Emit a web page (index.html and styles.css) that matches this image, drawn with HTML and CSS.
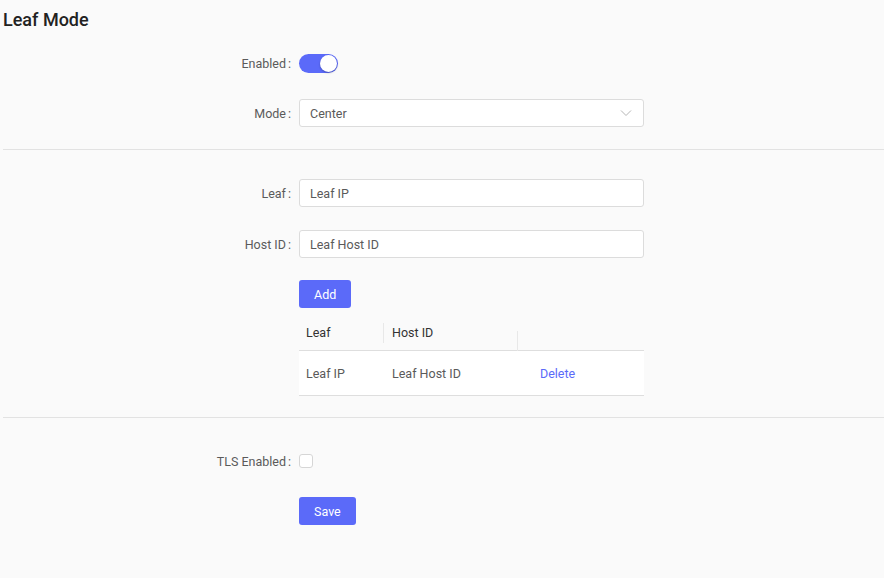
FILE: index.html
```html
<!DOCTYPE html>
<html>
<head lang="en">
    <meta charset="UTF-8">
    <title>Leaf Mode</title>
    <link rel="stylesheet" href="styles.css">
</head>
<body>
<div class="page">
    <h1 class="title">Leaf Mode</h1>

    <div class="section first">
        <div class="row">
            <label class="label">Enabled</label>
            <div class="control">
                <span class="switch"><span class="knob"></span></span>
            </div>
        </div>
        <div class="row">
            <label class="label">Mode</label>
            <div class="control">
                <div class="select">
                    <span>Center</span>
                    <svg width="12" height="8" viewBox="0 0 12 8">
                        <path d="M1 1.5 L6 6.5 L11 1.5" fill="none" stroke="#b5b5b5" stroke-width="1"/>
                    </svg>
                </div>
            </div>
        </div>
    </div>

    <div class="section second">
        <div class="row">
            <label class="label">Leaf</label>
            <div class="control">
                <div class="input">Leaf IP</div>
            </div>
        </div>
        <div class="row">
            <label class="label">Host ID</label>
            <div class="control">
                <div class="input">Leaf Host ID</div>
            </div>
        </div>
        <div class="row tight">
            <span class="label"></span>
            <div class="control">
                <button class="btn">Add</button>
            </div>
        </div>
        <div class="row table-row">
            <span class="label"></span>
            <div class="control">
                <div class="table">
                    <div class="thead">
                        <div class="th">Leaf</div>
                        <div class="th sep">Host ID</div>
                        <div class="th sep"></div>
                    </div>
                    <div class="tr">
                        <div class="td">Leaf IP</div>
                        <div class="td td2">Leaf Host ID</div>
                        <div class="td"><a class="link">Delete</a></div>
                    </div>
                </div>
            </div>
        </div>
    </div>

    <div class="section third">
        <div class="row">
            <label class="label">TLS Enabled</label>
            <div class="control">
                <span class="checkbox"></span>
            </div>
        </div>
        <div class="row">
            <span class="label"></span>
            <div class="control">
                <button class="btn save">Save</button>
            </div>
        </div>
    </div>
</div>
</body>
</html>
```

FILE: styles.css
```css
* {
    margin: 0;
    padding: 0;
    box-sizing: border-box;
}

body {
    background-color: #fafafa;
    font-family: Roboto, "Liberation Sans", sans-serif;
    font-size: 12.5px;
    color: #5a5a5a;
}

.page {
    padding-left: 3px;
}

.title {
    padding-top: 8px;
    font-size: 18px;
    font-weight: 500;
    line-height: 24px;
    color: #222;
}

.section {
    border-top: 1px solid #e2e2e2;
}

.section.first {
    border-top: none;
    padding-top: 17px;
}

.section.second {
    padding-top: 29px;
    padding-bottom: 21px;
}

.section.third {
    padding-top: 29px;
}

.row {
    display: flex;
    align-items: center;
    height: 28px;
    margin-bottom: 22px;
}

.section.second .row:first-child {
    margin-bottom: 23px;
}

.row.tight {
    margin-bottom: 7px;
}

.row.table-row {
    height: auto;
    margin-bottom: 0;
}

.label {
    flex: none;
    width: 296px;
    text-align: right;
    color: #5a5a5a;
    padding-right: 8px;
}

.label:not(:empty)::after {
    content: ":";
    margin-left: 2px;
}

.control {
    width: 345px;
}

.switch {
    display: flex;
    justify-content: flex-end;
    align-items: center;
    width: 39px;
    height: 19px;
    padding: 0 1px;
    border-radius: 10px;
    background-color: #5b6af9;
}

.knob {
    width: 17px;
    height: 17px;
    border-radius: 50%;
    background-color: #fff;
    box-shadow: 0 1px 2px rgba(0, 0, 0, 0.25);
}

.select,
.input {
    display: flex;
    align-items: center;
    justify-content: space-between;
    height: 28px;
    padding: 0 11px 0 10px;
    background-color: #fff;
    border: 1px solid #dcdcdc;
    border-radius: 3px;
    color: #5a5a5a;
}

.btn {
    height: 28px;
    padding: 0 15px;
    border: none;
    border-radius: 3px;
    background-color: #5b6af9;
    color: #fff;
    font-family: Roboto, "Liberation Sans", sans-serif;
    font-size: 12.5px;
}

.table {
    width: 345px;
}

.thead,
.tr {
    display: grid;
    grid-template-columns: 84px 134px 1fr;
}

.thead {
    height: 36px;
    align-items: center;
    border-bottom: 1px solid #dedede;
    color: #333;
}

.th {
    position: relative;
    padding-left: 7px;
}

.th.sep {
    padding-left: 9px;
}

.th.sep::before {
    content: "";
    position: absolute;
    left: 0;
    top: -2px;
    height: 20px;
    border-left: 1px solid #e8e8e8;
}

.tr {
    height: 45px;
    align-items: center;
    background-color: #fff;
    border-bottom: 1px solid #dedede;
}

.td {
    padding-left: 7px;
}

.td2 {
    padding-left: 9px;
}

.link {
    margin-left: 16px;
    color: #5b6af9;
}

.checkbox {
    display: block;
    width: 14px;
    height: 14px;
    border: 1px solid #d6d6d6;
    border-radius: 3px;
    background-color: #fff;
}
```
